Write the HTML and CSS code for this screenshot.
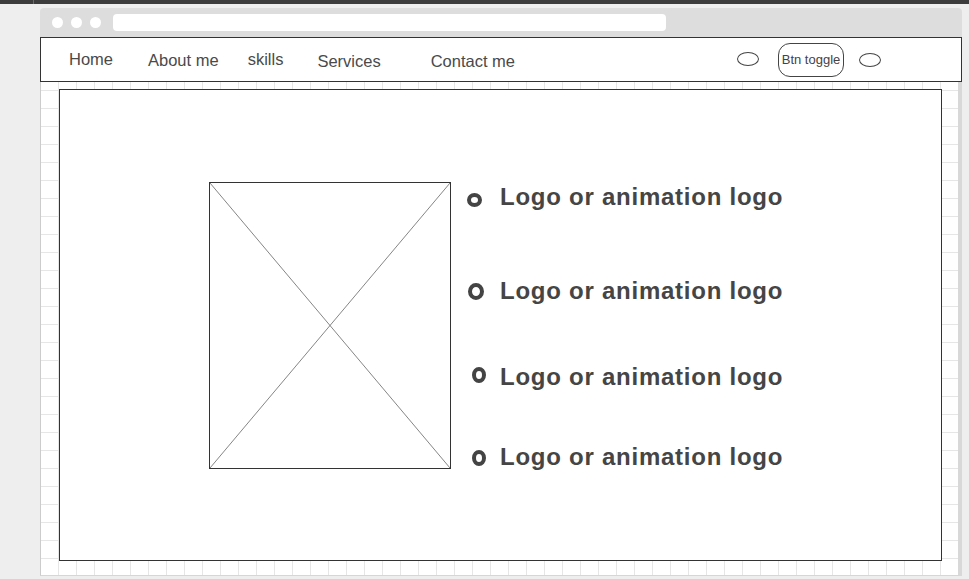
FILE: index.html
```html
<!DOCTYPE html>
<html lang="en">
<head>
    <meta charset="UTF-8">
    <meta name="viewport" content="width=device-width, initial-scale=1.0">
    <title>Portfolio Wireframe</title>
    <link rel="stylesheet" href="styles.css">
</head>
<body>
    <div class="topbar"><span class="topbar-split"></span></div>

    <div class="window">
        <!-- Browser chrome -->
        <div class="titlebar">
            <span class="dot"></span>
            <span class="dot"></span>
            <span class="dot"></span>
            <div class="address"></div>
        </div>

        <!-- Navigation -->
        <nav class="nav">
            <a class="nav-link nav-home">Home</a>
            <a class="nav-link nav-about">About me</a>
            <a class="nav-link nav-skills">skills</a>
            <a class="nav-link nav-services">Services</a>
            <a class="nav-link nav-contact">Contact me</a>
            <div class="nav-tools">
                <span class="oval"></span>
                <button class="toggle">Btn toggle</button>
                <span class="oval oval-right"></span>
            </div>
        </nav>

        <!-- Canvas -->
        <div class="canvas">
            <div class="main-box">
                <div class="placeholder">
                    <svg width="240" height="285" viewBox="0 0 240 285" preserveAspectRatio="none">
                        <line x1="0" y1="0" x2="240" y2="285" stroke="#666" stroke-width="0.8"/>
                        <line x1="240" y1="0" x2="0" y2="285" stroke="#666" stroke-width="0.8"/>
                    </svg>
                </div>
                <ul class="logo-list">
                    <li class="logo-item item-1"><span class="ring"></span>Logo or animation logo</li>
                    <li class="logo-item item-2"><span class="ring"></span>Logo or animation logo</li>
                    <li class="logo-item item-3"><span class="ring"></span>Logo or animation logo</li>
                    <li class="logo-item item-4"><span class="ring"></span>Logo or animation logo</li>
                </ul>
            </div>
        </div>
    </div>
</body>
</html>
```

FILE: styles.css
```css
/* Wireframe mockup - grey sketch theme */
body {
    margin: 0;
    background-color: #eeeeee;
    font-family: "Liberation Sans", Arial, sans-serif;
    color: #444444;
}
.topbar {
    height: 4px;
    background-color: #3c3c3c;
    position: relative;
}
.topbar-split {
    position: absolute;
    left: 33px;
    top: 0;
    width: 1px;
    height: 4px;
    background-color: #6a6a6a;
}
.window {
    margin: 4px 0 0 40px;
    width: 922px;
}
.titlebar {
    height: 29px;
    background-color: #dddddd;
    border-radius: 4px 4px 0 0;
    display: flex;
    align-items: center;
    padding-left: 12px;
    gap: 8px;
}
.dot {
    width: 11px;
    height: 11px;
    border-radius: 50%;
    background-color: #ffffff;
}
.address {
    width: 553px;
    height: 17px;
    margin-left: 4px;
    background-color: #ffffff;
    border-radius: 4px;
    margin-top: -1px;
}
.nav {
    height: 43px;
    border: 1px solid #333333;
    background-color: #ffffff;
    display: flex;
    align-items: center;
}
.nav-link {
    font-size: 16.5px;
    color: #4a4a4a;
}
.nav-home { margin-left: 28px; margin-top: -1px; }
.nav-about { margin-left: 35px; margin-top: 2px; }
.nav-skills { margin-left: 29px; margin-top: -1px; }
.nav-services { margin-left: 34px; margin-top: 4px; }
.nav-contact { margin-left: 50px; margin-top: 4px; }
.nav-tools {
    margin-left: auto;
    margin-right: 80px;
    display: flex;
    align-items: center;
}
.oval {
    width: 20px;
    height: 12px;
    border: 1px solid #444444;
    border-radius: 50%;
    margin-top: -1px;
}
.oval-right {
    margin-left: 15px;
    margin-top: 1px;
}
.toggle {
    margin-left: 19px;
    width: 66px;
    height: 34px;
    padding: 0;
    border: 1px solid #444444;
    border-radius: 12px;
    background-color: #ffffff;
    font-family: "Liberation Sans", Arial, sans-serif;
    font-size: 13px;
    color: #444444;
}
.canvas {
    height: 494px;
    box-sizing: border-box;
    border-left: 1px solid #cccccc;
    border-right: 4px solid #d8d8d8;
    border-bottom: 1px solid #d6d6d6;
    background-color: #ffffff;
    background-image:
        linear-gradient(to right, #e6e6e6 1px, transparent 1px),
        linear-gradient(to bottom, #e6e6e6 1px, transparent 1px);
    background-size: 18px 18px;
    background-position: -1px 8px;
    padding: 7px 0 0 18px;
}
.main-box {
    width: 881px;
    height: 470px;
    border: 1px solid #333333;
    background-color: #ffffff;
    display: flex;
    align-items: flex-start;
}
.placeholder {
    margin: 92px 0 0 149px;
    width: 240px;
    height: 285px;
    border: 1px solid #333333;
    overflow: hidden;
}
.placeholder svg {
    display: block;
    width: 240px;
    height: 285px;
}
.logo-list {
    list-style: none;
    margin: 0 0 0 16px;
    padding: 0;
    display: flex;
    flex-direction: column;
}
.logo-item {
    font-size: 24px;
    font-weight: bold;
    line-height: 28px;
    letter-spacing: 0.75px;
    color: #454545;
    display: flex;
    align-items: flex-start;
    white-space: nowrap;
}
.ring {
    box-sizing: border-box;
    border: 4px solid #444444;
    border-radius: 50%;
    flex-shrink: 0;
}
.item-1 { margin-top: 93px; }
.item-1 .ring { width: 15px; height: 14px; margin: 10px 18px 0 0; }
.item-2 { margin-top: 66px; }
.item-2 .ring { width: 16px; height: 17px; margin: 6px 16px 0 1px; }
.item-3 { margin-top: 58px; }
.item-3 .ring { width: 14px; height: 16px; margin: 4px 14px 0 5px; }
.item-4 { margin-top: 52px; }
.item-4 .ring { width: 14px; height: 16px; margin: 7px 14px 0 5px; }
```
